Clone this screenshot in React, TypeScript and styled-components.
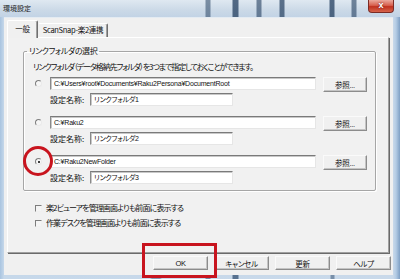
import styled, { createGlobalStyle } from 'styled-components';

const UI_FONT = `"Liberation Sans", "Noto Sans CJK JP", sans-serif`;

const GlobalStyle = createGlobalStyle`
  html, body { margin: 0; padding: 0; background: #fff; }
  body { font-family: ${UI_FONT}; color: #111; }
`;

const Window = styled.div`
  position: relative;
  width: 400px;
  height: 279px;
  display: flex;
  flex-direction: column;
  overflow: hidden;
  background:
    linear-gradient(90deg,
      transparent 0 150px, rgba(50, 80, 115, 0.45) 152px 160px, transparent 162px 205px,
      rgba(40, 70, 105, 0.55) 206px 210px, transparent 211px 232px,
      rgba(40, 70, 105, 0.7) 233px 238px, transparent 239px 330px,
      rgba(40, 70, 105, 0.5) 331px 334px, transparent 335px) bottom / 100% 4px no-repeat,
    linear-gradient(90deg, #a9c4e0 0, #c6d8ea 4px, #c9d9ea 393px, #b3cbe4 396px, #7e9fc4 400px);
`;

const TitleBar = styled.div`
  height: 17px;
  flex: none;
  display: flex;
  justify-content: space-between;
  align-items: flex-start;
  background:
    linear-gradient(90deg,
      transparent 0 205px, rgba(40, 68, 100, 0.55) 206px 210px, transparent 211px 232px,
      rgba(35, 62, 95, 0.75) 233px 238px, transparent 239px 256px,
      rgba(35, 62, 95, 0.6) 257px 261px, transparent 262px 279px,
      rgba(35, 62, 95, 0.7) 280px 284px, transparent 285px 329px,
      rgba(35, 62, 95, 0.75) 330px 334px, transparent 335px 351px,
      rgba(35, 62, 95, 0.6) 352px 356px, transparent 357px),
    linear-gradient(180deg, #dfe8f1 0, #cbd9e7 60%, #c2d3e5 100%);
`;

const Title = styled.span`
  padding: 4px 0 0 3px;
  font-family: "Noto Sans CJK JP", sans-serif;
  font-size: 7px;
  line-height: 9px;
  color: #1a1a1a;
`;

const CloseButton = styled.div`
  width: 26px;
  height: 13px;
  margin-right: 6px;
  box-sizing: border-box;
  border: 1px solid #7b2b24;
  border-top: none;
  border-radius: 0 0 4px 4px;
  background: linear-gradient(180deg, #eba99d 0, #d7604e 45%, #c0321f 55%, #d6644c 100%);
  color: #fff;
  font-family: "Liberation Sans", sans-serif;
  font-weight: bold;
  font-size: 9px;
  line-height: 11px;
  text-align: center;
  text-shadow: 0 0 2px #5a1010;
`;

const Client = styled.div`
  flex: 1;
  margin: 0 7px 4px 4px;
  padding: 2px 2px 0 3px;
  display: flex;
  flex-direction: column;
  background: #f0f0f0;
  border-top: 1px solid #e4ebf2;
`;

const TabStrip = styled.div`
  height: 17px;
  display: flex;
  align-items: flex-end;
  position: relative;
  z-index: 1;
`;

const Tab = styled.div<{ $active?: boolean }>`
  box-sizing: border-box;
  width: ${(p) => (p.$active ? 31 : 70)}px;
  height: ${(p) => (p.$active ? 18 : 14)}px;
  margin-bottom: ${(p) => (p.$active ? -1 : 0)}px;
  border-top: 1px solid #fff;
  border-left: 1px solid ${(p) => (p.$active ? '#fff' : 'transparent')};
  border-right: 1px solid #6f6f6f;
  box-shadow: inset -1px 0 0 #a0a0a0;
  border-radius: 2px 2px 0 0;
  background: #f0f0f0;
  font-family: "Noto Sans CJK JP", sans-serif;
  font-size: 7.5px;
  line-height: ${(p) => (p.$active ? 15 : 12)}px;
  letter-spacing: -0.3px;
  font-feature-settings: "palt";
  text-align: center;
  white-space: nowrap;
`;

const Panel = styled.div`
  height: 216px;
  box-sizing: border-box;
  margin-right: 2px;
  padding: 8px 12px 0 15px;
  border-top: 1px solid #fff;
  border-left: 1px solid #fff;
  border-right: 1px solid #a0a0a0;
  border-bottom: 1px solid #a0a0a0;
  box-shadow: 1px 1px 0 #6a6a6a;
  background: #f1f1f1;
`;

const GroupBox = styled.fieldset`
  margin: 0;
  padding: 6px 0 6px 9px;
  border: 1px solid #a6a6a6;
  border-radius: 2px;
  box-shadow: 1px 1px 0 #fff, inset 1px 1px 0 #fff;
`;

const GroupTitle = styled.legend`
  margin-left: -6px;
  padding: 0 2px;
  font-family: "Noto Sans CJK JP", sans-serif;
  font-size: 8px;
  line-height: 10px;
  letter-spacing: -0.4px;
  font-feature-settings: "palt";
`;

const JpText = styled.span`
  font-family: "Noto Sans CJK JP", sans-serif;
  font-size: 8px;
  line-height: 10px;
  letter-spacing: -0.9px;
  font-feature-settings: "palt";
  white-space: nowrap;
`;

const Description = styled(JpText)`
  display: block;
  letter-spacing: -1.1px;
`;

const OptionList = styled.div`
  display: flex;
  flex-direction: column;
  gap: 10px;
  margin-top: 5px;
`;

const Option = styled.div`
  display: grid;
  grid-template-columns: 17px auto;
  row-gap: 1px;
`;

const RadioSlot = styled.div`
  position: relative;
  padding: 3px 0 0 2px;
`;

const Radio = styled.span<{ $checked?: boolean }>`
  position: relative;
  display: block;
  box-sizing: border-box;
  width: 7px;
  height: 7px;
  border-radius: 50%;
  border: 1px solid;
  border-color: #7d7d7d #eaeaea #eaeaea #7d7d7d;
  background: #f6f6f6;

  &::after {
    content: '';
    display: ${(p) => (p.$checked ? 'block' : 'none')};
    position: absolute;
    left: 1.5px;
    top: 1.5px;
    width: 2px;
    height: 2px;
    border-radius: 50%;
    background: #000;
  }
`;

const RedCircle = styled.span`
  position: absolute;
  left: -10px;
  top: -9px;
  width: 30px;
  height: 30px;
  box-sizing: border-box;
  border: 3.5px solid #c8141e;
  border-radius: 50%;
`;

const PathRow = styled.div`
  display: flex;
  align-items: flex-start;
  gap: 7px;
`;

const TextBox = styled.div<{ $width: number }>`
  width: ${(p) => p.$width}px;
  height: 13px;
  box-sizing: border-box;
  padding-left: 3px;
  border-top: 1px solid #7a7a7a;
  border-left: 1px solid #8a8a8a;
  border-right: 1px solid #e6e6e6;
  border-bottom: 1px solid #e6e6e6;
  box-shadow: inset 1px 1px 0 #c8c8c8;
  background: #fff;
  font-family: "Liberation Sans", "Noto Sans CJK JP", sans-serif;
  font-size: 7px;
  line-height: 11px;
  letter-spacing: -0.2px;
  font-feature-settings: "palt";
  white-space: nowrap;
  overflow: hidden;
`;

const ClassicButton = styled.div<{ $width: number; $height: number }>`
  width: ${(p) => p.$width}px;
  height: ${(p) => p.$height}px;
  box-sizing: border-box;
  border: 1px solid;
  border-color: #fafafa #8c8c8c #8c8c8c #fafafa;
  box-shadow: inset -1px -1px 0 #c4c4c4;
  background: #f0f0f0;
  display: flex;
  align-items: center;
  justify-content: center;
  font-family: "Liberation Sans", "Noto Sans CJK JP", sans-serif;
  font-size: 7.5px;
  letter-spacing: -0.3px;
  font-feature-settings: "palt";
  white-space: nowrap;
`;

const NameRow = styled.div`
  grid-column: 2;
  display: flex;
  align-items: center;
`;

const NameLabel = styled(JpText)`
  width: 40px;
  letter-spacing: 0;
`;

const CheckList = styled.div`
  margin-top: 12px;
  padding-left: 12px;
  display: flex;
  flex-direction: column;
  gap: 5px;
`;

const CheckRow = styled.div`
  display: flex;
  align-items: center;
  gap: 4px;
  height: 10px;
`;

const CheckBox = styled.span`
  width: 7px;
  height: 7px;
  box-sizing: border-box;
  border: 1px solid;
  border-color: #7d7d7d #f0f0f0 #f0f0f0 #7d7d7d;
  background: #f4f4f4;
`;

const ButtonRow = styled.div`
  display: flex;
  justify-content: flex-end;
  gap: 6px;
  margin-top: 3px;
`;

const Marked = styled.div`
  position: relative;
`;

const RedBox = styled.span`
  position: absolute;
  left: -11px;
  right: -9px;
  top: -13px;
  bottom: -8px;
  border: 3.5px solid #c8141e;
`;

const options = [
  { path: 'C:¥Users¥root¥Documents¥Raku2Persona¥DocumentRoot', name: 'リンクフォルダ1' },
  { path: 'C:¥Raku2', name: 'リンクフォルダ2' },
  { path: 'C:¥Raku2NewFolder', name: 'リンクフォルダ3', checked: true },
];

export default function App() {
  return (
    <>
      <GlobalStyle />
      <Window>
        <TitleBar>
          <Title>環境設定</Title>
          <CloseButton>x</CloseButton>
        </TitleBar>
        <Client>
          <TabStrip>
            <Tab $active>一般</Tab>
            <Tab>ScanSnap-楽2連携</Tab>
          </TabStrip>
          <Panel>
            <GroupBox>
              <GroupTitle>リンクフォルダの選択</GroupTitle>
              <Description>
                リンクフォルダ（データ格納先フォルダ）を3つまで指定しておくことができます。
              </Description>
              <OptionList>
                {options.map((o) => (
                  <Option key={o.name}>
                    <RadioSlot>
                      <Radio $checked={o.checked} />
                      {o.checked && <RedCircle />}
                    </RadioSlot>
                    <PathRow>
                      <TextBox $width={266}>{o.path}</TextBox>
                      <ClassicButton $width={44} $height={15}>参照...</ClassicButton>
                    </PathRow>
                    <NameRow>
                      <NameLabel>設定名称:</NameLabel>
                      <TextBox $width={143}>{o.name}</TextBox>
                    </NameRow>
                  </Option>
                ))}
              </OptionList>
            </GroupBox>
            <CheckList>
              <CheckRow>
                <CheckBox />
                <JpText>楽2ビューアを管理画面よりも前面に表示する</JpText>
              </CheckRow>
              <CheckRow>
                <CheckBox />
                <JpText>作業デスクを管理画面よりも前面に表示する</JpText>
              </CheckRow>
            </CheckList>
          </Panel>
          <ButtonRow>
            <Marked>
              <ClassicButton $width={55} $height={14}>OK</ClassicButton>
              <RedBox />
            </Marked>
            <ClassicButton $width={55} $height={14}>キャンセル</ClassicButton>
            <ClassicButton $width={55} $height={14}>更新</ClassicButton>
            <ClassicButton $width={55} $height={14}>ヘルプ</ClassicButton>
          </ButtonRow>
        </Client>
      </Window>
    </>
  );
}
